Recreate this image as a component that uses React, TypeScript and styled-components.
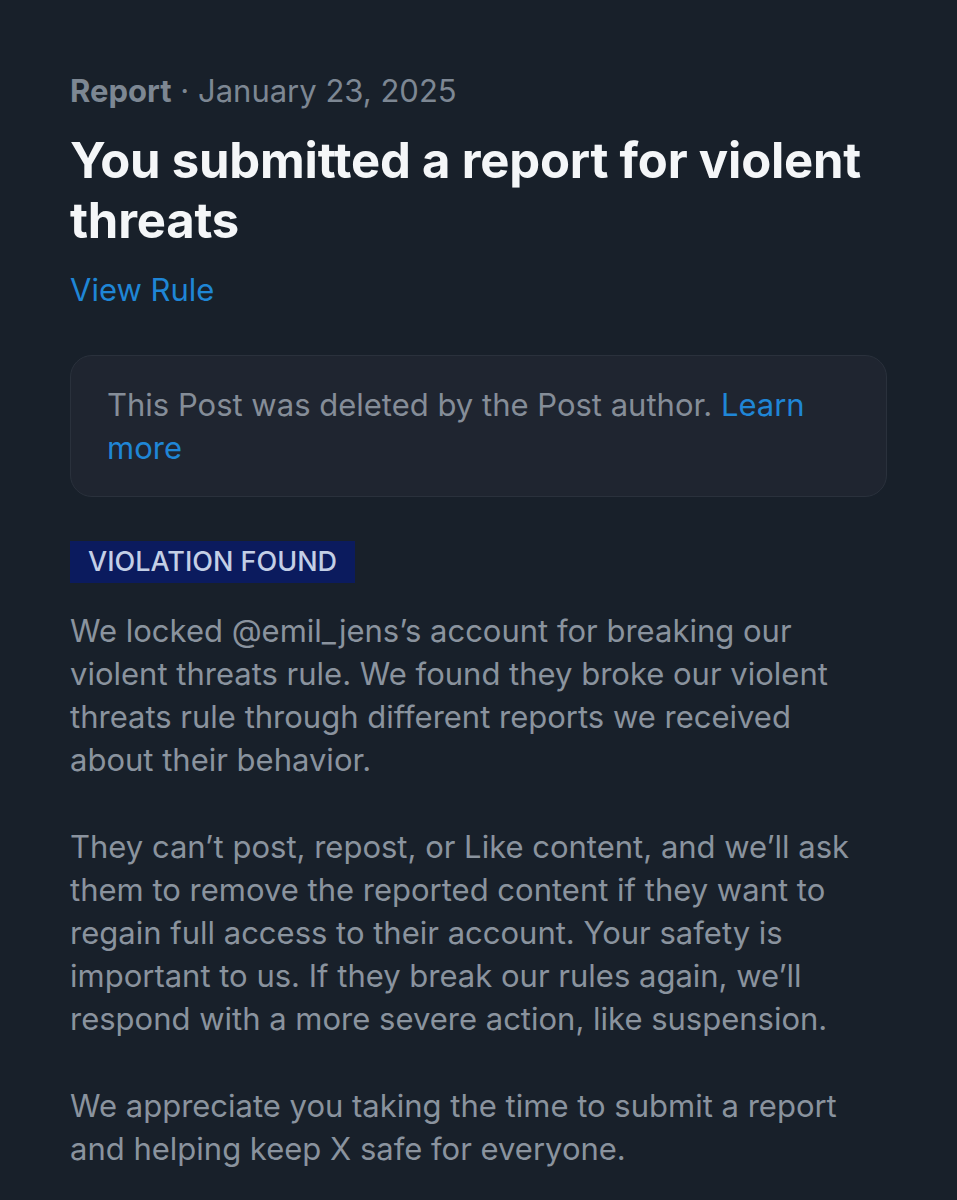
import React from "react";
import styled, { createGlobalStyle } from "styled-components";

const Global = createGlobalStyle`
  html, body { margin: 0; padding: 0; background: #18202a; }
  body { font-family: Inter, "Liberation Sans", Arial, sans-serif; -webkit-font-smoothing: antialiased; }
`;

const Page = styled.div`
  width: 957px;
  height: 1200px;
  box-sizing: border-box;
  background: #18202a;
  padding: 70px 70px 0 70px;
  overflow: hidden;
  display: flex;
  flex-direction: column;
`;

const Meta = styled.div`
  font-size: 31px;
  line-height: 42px;
  color: #7d8793;
`;

const MetaStrong = styled.span`
  font-weight: 700;
`;

const Title = styled.h1`
  margin: 19px 0 0 0;
  font-size: 49px;
  line-height: 60px;
  font-weight: 700;
  color: #f4f6f8;
  letter-spacing: -0.2px;
`;

const Link = styled.a`
  color: #1f86d6;
  text-decoration: none;
  cursor: pointer;
`;

const RuleLink = styled(Link)`
  margin-top: 18px;
  font-size: 31px;
  line-height: 42px;
`;

const NoticeBox = styled.div`
  margin-top: 44px;
  width: 817px;
  box-sizing: border-box;
  padding: 27px 36px 27px 36px;
  background: #1f2530;
  border: 1px solid #2a313c;
  border-radius: 22px;
  font-size: 31px;
  line-height: 43px;
  color: #858d98;
`;

const NoticeText = styled.span``;

const Badge = styled.div`
  align-self: flex-start;
  margin-top: 44px;
  background: #0b1b5e;
  color: #c3cfe6;
  font-size: 27px;
  line-height: 42px;
  padding: 0 18px;
  font-weight: 500;
`;

const Paragraph = styled.p<{ $first?: boolean }>`
  margin: ${(p) => (p.$first ? "26px" : "44px")} 0 0 0;
  font-size: 31px;
  line-height: 43px;
  color: #8a939e;
  width: 805px;
`;

export default function App() {
  return (
    <>
      <Global />
      <Page>
        <Meta>
          <MetaStrong>Report</MetaStrong> · January 23, 2025
        </Meta>
        <Title>You submitted a report for violent threats</Title>
        <RuleLink>View Rule</RuleLink>
        <NoticeBox>
          <NoticeText>This Post was deleted by the Post author. </NoticeText>
          <Link>Learn more</Link>
        </NoticeBox>
        <Badge>VIOLATION FOUND</Badge>
        <Paragraph $first>
          We locked @emil_jens’s account for breaking our violent threats rule. We found they
          broke our violent threats rule through different reports we received about their
          behavior.
        </Paragraph>
        <Paragraph>
          They can’t post, repost, or Like content, and we’ll ask them to remove the reported
          content if they want to regain full access to their account. Your safety is important
          to us. If they break our rules again, we’ll respond with a more severe action, like
          suspension.
        </Paragraph>
        <Paragraph>
          We appreciate you taking the time to submit a report and helping keep X safe for
          everyone.
        </Paragraph>
      </Page>
    </>
  );
}
